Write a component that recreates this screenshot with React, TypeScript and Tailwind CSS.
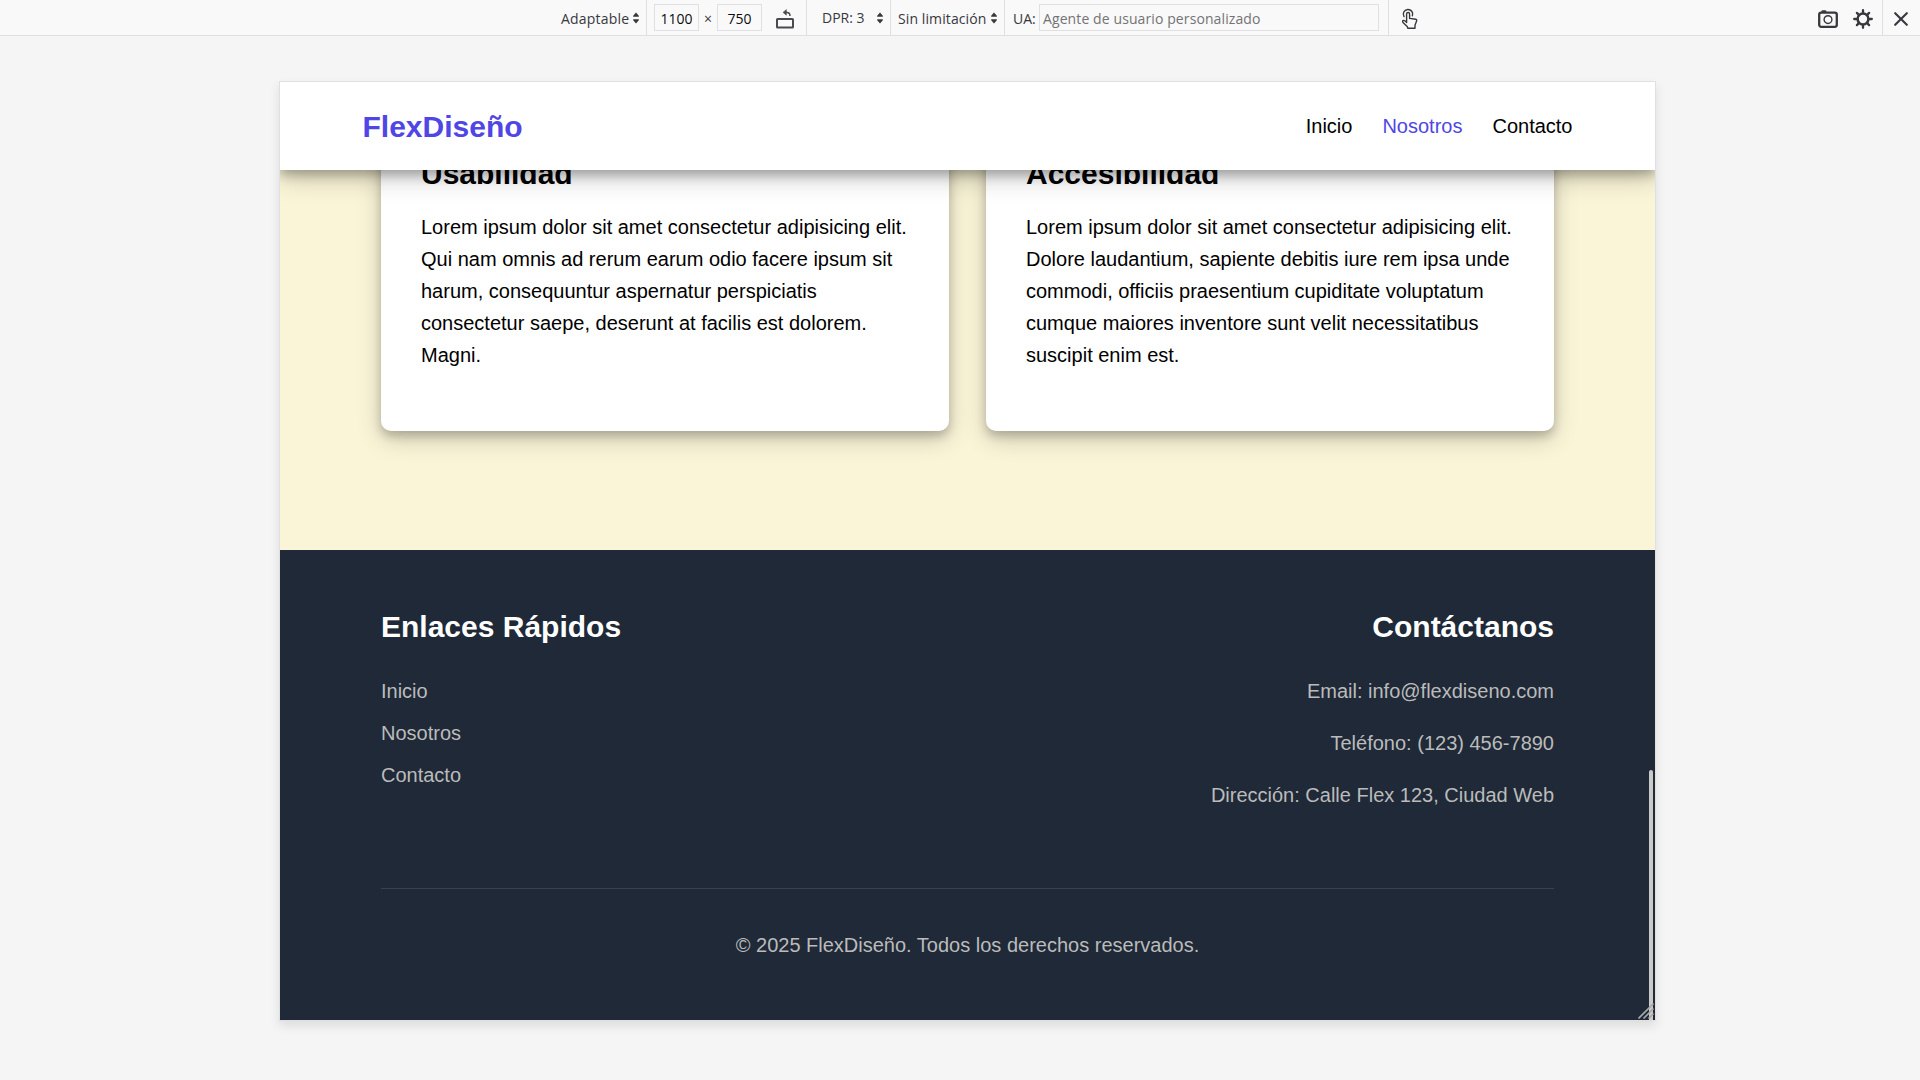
import React from "react";

function Arrows({ className = "" }: { className?: string }) {
  return (
    <svg width="8" height="12" viewBox="0 0 8 12" className={`shrink-0 ${className}`} fill="#38383d">
      <path d="M4 0.6 L7 4 Q7 4.7 6.4 4.7 H1.6 Q1 4.7 1 4 Z" />
      <path d="M4 11.4 L7 8 Q7 7.3 6.4 7.3 H1.6 Q1 7.3 1 8 Z" />
    </svg>
  );
}

function RotateIcon() {
  return (
    <svg width="20" height="20" viewBox="0 0 20 20" fill="none" stroke="#4a4a4f" className="shrink-0">
      <rect x="2" y="10" width="16" height="8.6" rx="0.6" strokeWidth="2" />
      <path d="M10 3.4 H12 Q15 3.4 15 7" strokeWidth="1.5" />
      <path d="M11.4 0.6 L8 3.4 L11.4 6.2 Z" fill="#4a4a4f" strokeWidth="0.5" />
    </svg>
  );
}

function TouchIcon() {
  return (
    <svg width="18" height="22" viewBox="0 0 18 22" fill="none" stroke="#38383d" strokeWidth="1.4" strokeLinecap="round" strokeLinejoin="round" className="shrink-0">
      <path d="M3 8.6 A4.7 4.7 0 1 1 11.4 7.8" />
      <path d="M5.6 14.4 V6 A1.5 1.5 0 0 1 8.6 6 V10.4 L14.8 11.2 Q16 11.5 15.7 12.8 L14 17.2 V20.2 H6.8 L6.2 18.4 L2 14.6 Q1 13 2.4 12.4 Q3.4 12 5.6 14.4" />
    </svg>
  );
}

function CameraIcon() {
  return (
    <svg width="20" height="18" viewBox="0 0 20 18" fill="none" stroke="#38383d" className="shrink-0">
      <rect x="1.2" y="2.6" width="17.6" height="14.2" rx="2" strokeWidth="2.3" />
      <rect x="3.4" y="0.2" width="5" height="2.6" rx="1.2" fill="#38383d" stroke="none" />
      <circle cx="10" cy="9.6" r="3.9" strokeWidth="1.4" />
    </svg>
  );
}

function GearIcon() {
  return (
    <svg width="20" height="20" viewBox="0 0 20 20" fill="none" stroke="#38383d" strokeLinecap="round" className="shrink-0">
      <circle cx="10" cy="10" r="5.4" strokeWidth="2.5" />
      <path
        d="M10 1.2 V4 M10 16 V18.8 M1.2 10 H4 M16 10 H18.8 M3.9 3.9 L5.6 5.6 M14.4 14.4 L16.1 16.1 M3.9 16.1 L5.6 14.4 M14.4 5.6 L16.1 3.9"
        strokeWidth="2.3"
      />
    </svg>
  );
}

function CloseIcon() {
  return (
    <svg width="14" height="14" viewBox="0 0 14 14" fill="none" stroke="#38383d" strokeWidth="2.1" strokeLinecap="round" className="shrink-0">
      <path d="M1.2 1.2 L12.8 12.8 M12.8 1.2 L1.2 12.8" />
    </svg>
  );
}

function Toolbar() {
  return (
    <div className="flex h-9 items-center border-b border-[#e0e0e2] bg-[#f9f9fa] pl-[561px] font-['Open_Sans','Noto_Sans',sans-serif] text-[14px] leading-5 whitespace-nowrap text-[#38383d]">
      <div className="flex h-full w-[86px] shrink-0 items-center border-r border-[#e0e0e2] pt-px">
        <span className="w-[71px] pt-px tracking-[0.2px]">Adaptable</span>
        <Arrows />
      </div>
      <div className="flex h-full w-[160px] shrink-0 items-center border-r border-[#e0e0e2] pl-[7px]">
        <span className="flex h-[27px] w-[45px] items-center justify-center border border-[#e0e0e2] pt-0.5 text-[#0c0c0d]">1100</span>
        <span className="w-[18px] pt-0.5 text-center">×</span>
        <span className="flex h-[27px] w-[45px] items-center justify-center border border-[#e0e0e2] pt-0.5 text-[#0c0c0d]">750</span>
        <span className="ml-[13px] pt-0.5">
          <RotateIcon />
        </span>
      </div>
      <div className="flex h-full w-[84px] shrink-0 items-center border-r border-[#e0e0e2] pt-px pl-[15px]">
        <span className="w-[54px]">DPR: 3</span>
        <Arrows />
      </div>
      <div className="flex h-full w-[114px] shrink-0 items-center border-r border-[#e0e0e2] pt-px pl-[7px]">
        <span className="w-[92px] pt-px tracking-[0.1px]">Sin limitación</span>
        <Arrows />
      </div>
      <div className="flex h-full w-[384px] shrink-0 items-center border-r border-[#e0e0e2] pl-2">
        <span className="w-[26px] pt-0.5">UA:</span>
        <span className="flex h-[27px] w-[340px] items-center border border-[#e0e0e2] pt-0.5 pl-[3px] tracking-[0.1px] text-[#737373]">
          Agente de usuario personalizado
        </span>
      </div>
      <div className="ml-3 pt-0.5">
        <TouchIcon />
      </div>
      <div className="ml-auto flex h-full shrink-0 items-center gap-[15px] border-r border-[#e0e0e2] pt-[3px] pr-[9px]">
        <CameraIcon />
        <GearIcon />
      </div>
      <div className="flex w-[37px] shrink-0 pt-[3px] pl-[11px]">
        <CloseIcon />
      </div>
    </div>
  );
}

const cards = [
  {
    title: "Usabilidad",
    lines: [
      "Lorem ipsum dolor sit amet consectetur adipisicing elit.",
      "Qui nam omnis ad rerum earum odio facere ipsum sit",
      "harum, consequuntur aspernatur perspiciatis",
      "consectetur saepe, deserunt at facilis est dolorem.",
      "Magni.",
    ],
  },
  {
    title: "Accesibilidad",
    lines: [
      "Lorem ipsum dolor sit amet consectetur adipisicing elit.",
      "Dolore laudantium, sapiente debitis iure rem ipsa unde",
      "commodi, officiis praesentium cupiditate voluptatum",
      "cumque maiores inventore sunt velit necessitatibus",
      "suscipit enim est.",
    ],
  },
];

function SiteHeader() {
  return (
    <header className="relative z-10 flex h-[88px] shrink-0 items-center justify-between bg-white px-[82.5px] shadow-[0_5px_10px_rgba(0,0,0,0.25),0_7.5px_25px_rgba(0,0,0,0.22)]">
      <div className="pt-0.5 text-[30px] leading-[48px] font-bold text-[#4f46e5]">FlexDiseño</div>
      <nav className="flex gap-[30px]">
        <a>Inicio</a>
        <a className="text-[#4f46e5]">Nosotros</a>
        <a>Contacto</a>
      </nav>
    </header>
  );
}

function Footer() {
  return (
    <footer className="flex-1 bg-[#1f2937] px-[101px] pt-[53px] text-[#bbbbbb]">
      <div className="flex justify-between">
        <div>
          <h3 className="mb-6 text-[30px] leading-[48px] font-bold text-white">Enlaces Rápidos</h3>
          <ul className="flex flex-col gap-[10px]">
            <li>Inicio</li>
            <li>Nosotros</li>
            <li>Contacto</li>
          </ul>
        </div>
        <div className="text-right">
          <h3 className="mb-6 text-[30px] leading-[48px] font-bold text-white">Contáctanos</h3>
          <div className="flex flex-col gap-5">
            <p>Email: info@flexdiseno.com</p>
            <p>Teléfono: (123) 456-7890</p>
            <p>Dirección: Calle Flex 123, Ciudad Web</p>
          </div>
        </div>
      </div>
      <div className="mt-[77px] border-t border-[#374151] pt-10 text-center">
        © 2025 FlexDiseño. Todos los derechos reservados.
      </div>
    </footer>
  );
}

export default function App() {
  return (
    <div className="h-[1080px] w-[1920px] overflow-hidden bg-[#f5f5f5]">
      <Toolbar />
      <div className="relative mt-[45px] ml-[279px] h-[940px] w-[1377px] border border-[#e0e0e2] shadow-[0_5px_10px_rgba(12,12,13,0.1)]">
        <div className="flex h-[938px] flex-col overflow-hidden font-['Liberation_Sans',Arial,sans-serif] text-[20px] leading-8 text-black">
          <SiteHeader />
          <main className="flex h-[380px] shrink-0 items-end gap-[37px] bg-[#faf5d7] px-[101px] pb-[119px]">
            {cards.map((card) => (
              <section
                key={card.title}
                className="h-[340px] flex-1 rounded-[10px] bg-white p-10 whitespace-nowrap shadow-[0_5px_10px_rgba(0,0,0,0.2),0_7.5px_25px_rgba(0,0,0,0.19)]"
              >
                <div className="flex h-full flex-col justify-end pb-5">
                  <h3 className="mb-[13px] text-[30px] leading-[48px] font-bold">{card.title}</h3>
                  {card.lines.map((line) => (
                    <p key={line}>{line}</p>
                  ))}
                </div>
              </section>
            ))}
          </main>
          <Footer />
        </div>
        <div className="absolute right-[2px] bottom-0 h-[250px] w-1 rounded-t-sm bg-[#cbcacb]" />
        <svg className="absolute right-px bottom-px" width="16" height="16" viewBox="0 0 16 16" fill="none" stroke="#a8a8a8" strokeWidth="1.6">
          <path d="M0.5 15.5 L15.5 0.5 M5.5 15.5 L15.5 5.5 M10.5 15.5 L15.5 10.5" />
        </svg>
      </div>
    </div>
  );
}
